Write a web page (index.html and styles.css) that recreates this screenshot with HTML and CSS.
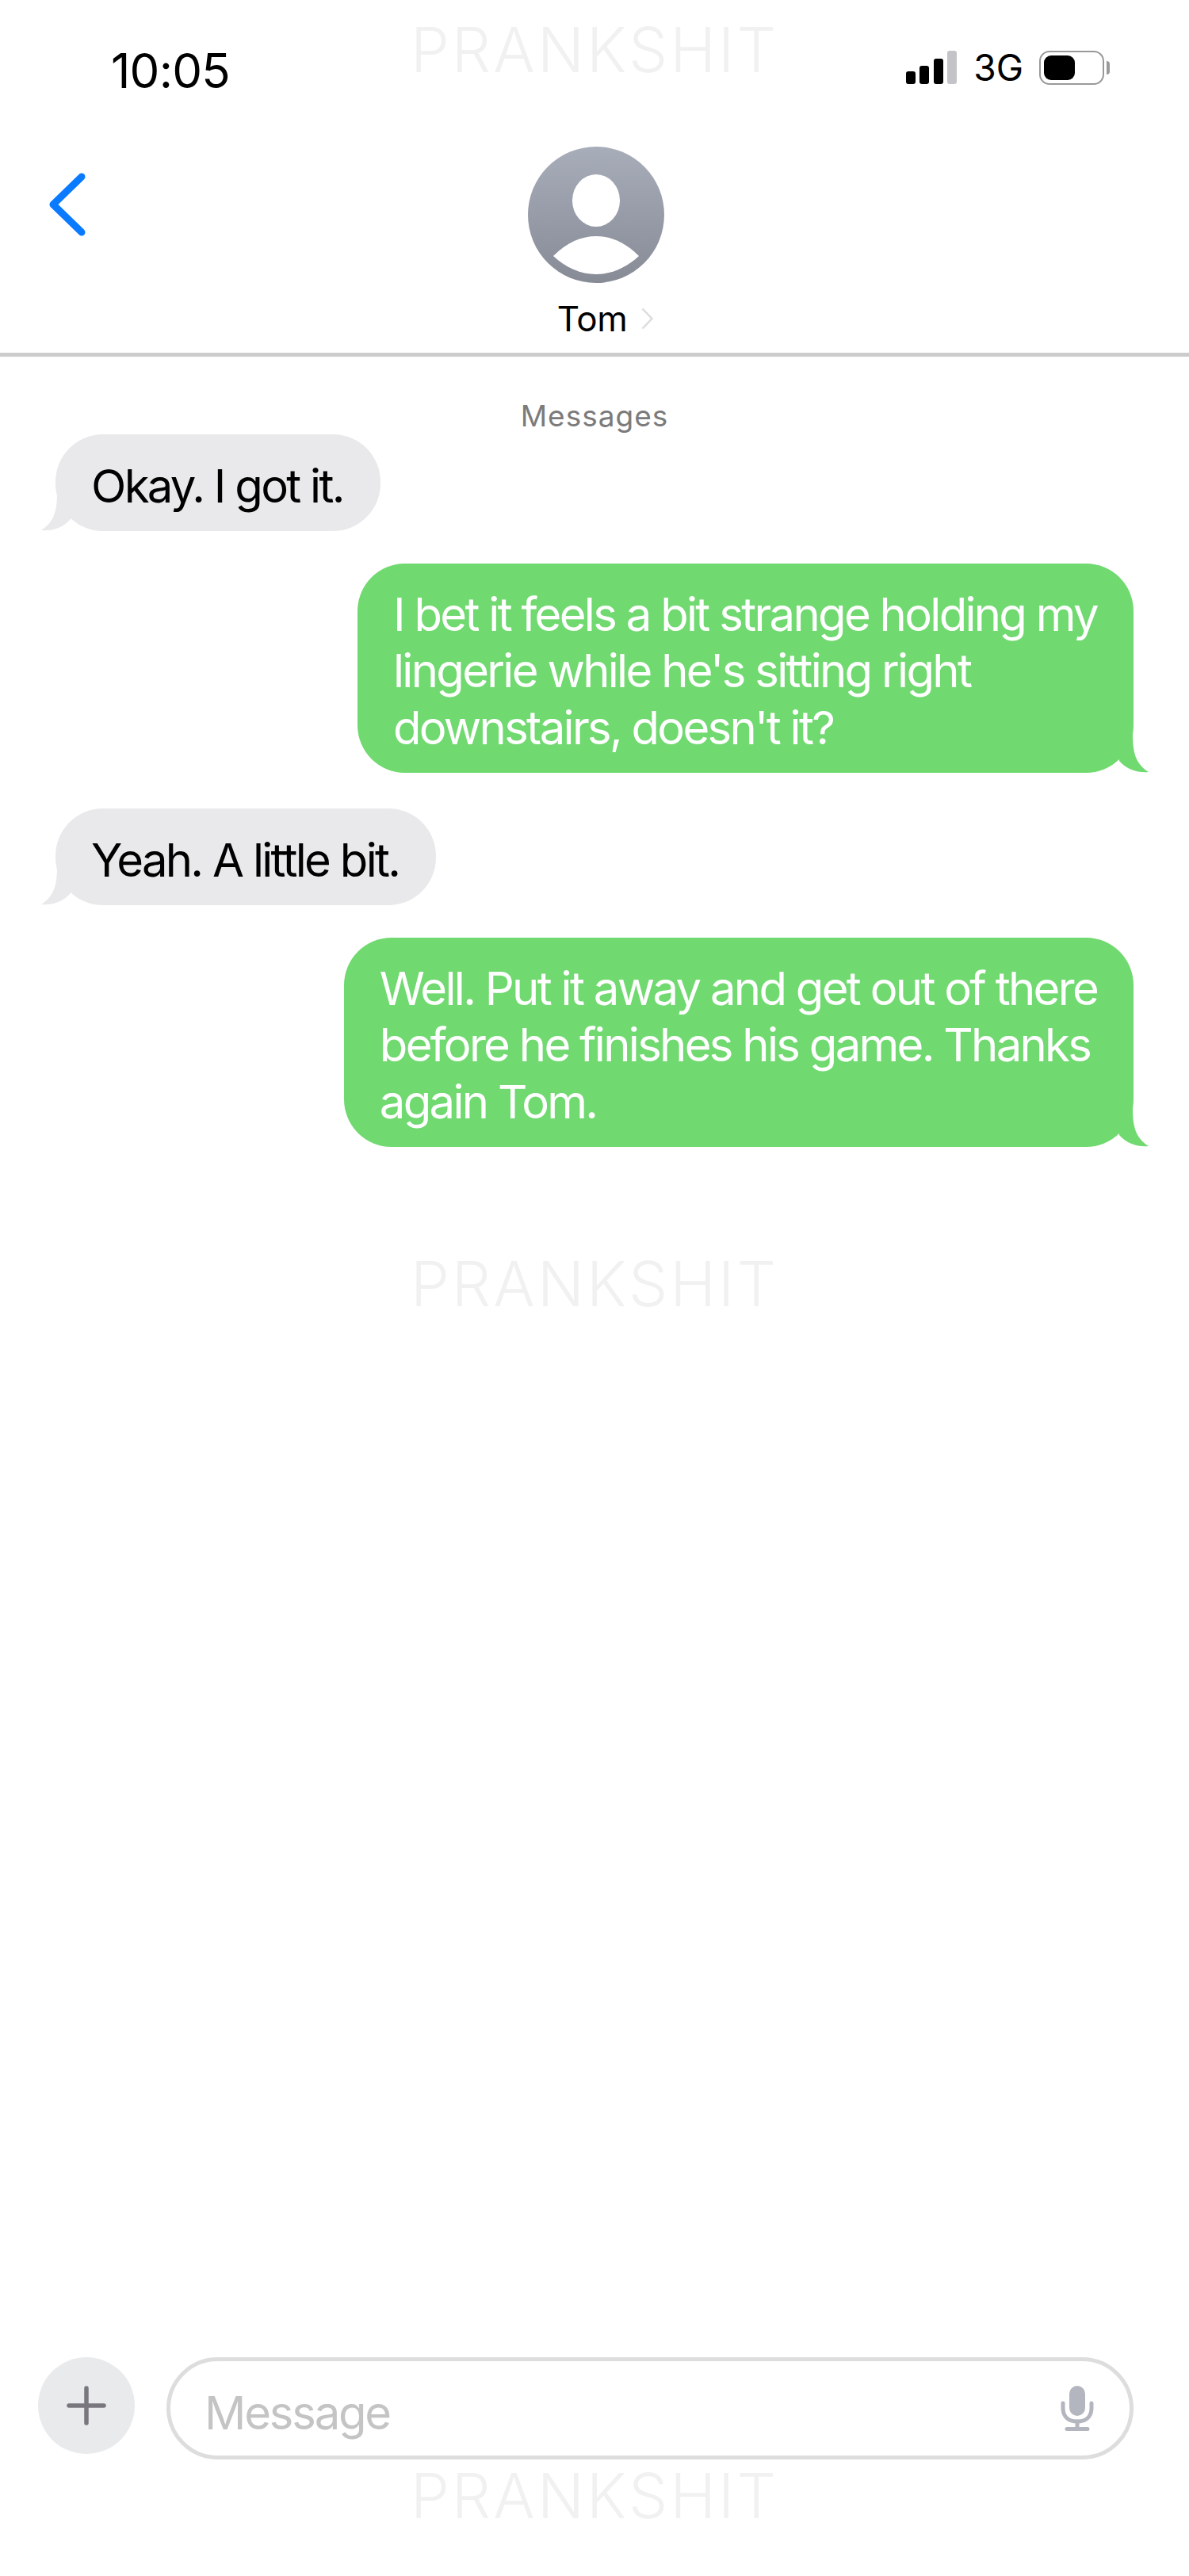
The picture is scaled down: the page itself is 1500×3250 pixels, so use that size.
FILE: index.html
```html
<!DOCTYPE html>
<html lang="en">
  <head>
    <meta charset="UTF-8" />
    <meta name="viewport" content="width=device-width, initial-scale=1.0" />
    <title>Messages</title>
    <link rel="stylesheet" href="styles.css">
  </head>
  <body>
    <div class="watermark wm-top">PRANKSHIT</div>
    <div class="watermark wm-middle">PRANKSHIT</div>
    <div class="watermark wm-bottom">PRANKSHIT</div>

    <div class="status-bar">
      <span class="time">10:05</span>
      <div class="status-icons">
        <div class="signal">
          <span class="bar bar1"></span>
          <span class="bar bar2"></span>
          <span class="bar bar3"></span>
          <span class="bar bar4"></span>
        </div>
        <span class="network">3G</span>
        <div class="battery">
          <div class="battery-level"></div>
        </div>
        <span class="battery-nub"></span>
      </div>
    </div>

    <div class="header">
      <svg class="back" viewBox="0 0 46 80" width="46" height="80">
        <path d="M41 5 L5 40 L41 75" fill="none" stroke="#0a7aff" stroke-width="9" stroke-linecap="round" stroke-linejoin="round" />
      </svg>
      <svg class="avatar" viewBox="0 0 172 172" width="172" height="172">
        <defs>
          <linearGradient id="avatarFill" x1="0" y1="0" x2="0" y2="1">
            <stop offset="0" stop-color="#a8adba" />
            <stop offset="1" stop-color="#868b96" />
          </linearGradient>
        </defs>
        <circle cx="86" cy="86" r="86" fill="url(#avatarFill)" />
        <ellipse cx="86" cy="68" rx="30" ry="33" fill="#fff" />
        <path d="M32 138 C50 120 68 113 86 113 C104 113 122 120 140 138 C125 152 106 161 86 161 C66 161 47 152 32 138 Z" fill="#fff" />
      </svg>
      <div class="contact">
        <span class="contact-name">Tom</span>
        <svg class="contact-arrow" viewBox="0 0 15 28" width="15" height="28">
          <path d="M1.5 1.5 L13.5 14 L1.5 26.5" fill="none" stroke="#dcdcdc" stroke-width="2.5" />
        </svg>
      </div>
    </div>

    <div class="thread">
      <div class="service">Messages</div>

      <div class="bubble received">
        <svg class="tail" viewBox="0 0 40 50" width="40" height="50">
          <path d="M21 0 C21 24 18 38 1 49 C14 50 27 47 38 35 L40 0 Z" fill="#e9e9eb" />
        </svg>
        Okay. I got it.
      </div>

      <div class="bubble sent">
        <svg class="tail" viewBox="0 0 40 50" width="40" height="50">
          <path d="M19 0 C19 24 22 38 39 49 C26 50 13 47 2 35 L0 0 Z" fill="#70d970" />
        </svg>
        I bet it feels a bit strange holding my<br>lingerie while he's sitting right<br>downstairs, doesn't it?
      </div>

      <div class="bubble received">
        <svg class="tail" viewBox="0 0 40 50" width="40" height="50">
          <path d="M21 0 C21 24 18 38 1 49 C14 50 27 47 38 35 L40 0 Z" fill="#e9e9eb" />
        </svg>
        Yeah. A little bit.
      </div>

      <div class="bubble sent">
        <svg class="tail" viewBox="0 0 40 50" width="40" height="50">
          <path d="M19 0 C19 24 22 38 39 49 C26 50 13 47 2 35 L0 0 Z" fill="#70d970" />
        </svg>
        Well. Put it away and get out of there<br>before he finishes his game. Thanks<br>again Tom.
      </div>
    </div>

    <div class="composer">
      <div class="plus">
        <svg viewBox="0 0 50 50" width="50" height="50">
          <path d="M25 3 V47 M3 25 H47" fill="none" stroke="#77777d" stroke-width="5.5" stroke-linecap="round" />
        </svg>
      </div>
      <div class="message-input">
        <span class="placeholder">Message</span>
        <svg class="mic" viewBox="0 0 42 58" width="42" height="58">
          <rect x="11" y="0" width="20" height="38" rx="10" fill="#b4b6bf" />
          <path d="M3 22 V28 C3 39 10 45 21 45 C32 45 39 39 39 28 V22" fill="none" stroke="#b4b6bf" stroke-width="5" stroke-linecap="round" />
          <path d="M21 45 V54 M8 54.5 H34" fill="none" stroke="#b4b6bf" stroke-width="5" stroke-linecap="round" />
        </svg>
      </div>
    </div>
  </body>
</html>
```

FILE: styles.css
```css
html,
body {
  margin: 0;
  padding: 0;
}

body {
  position: relative;
  width: 1500px;
  height: 3250px;
  overflow: hidden;
  background-color: #fff;
  font-family: Inter, "Liberation Sans", sans-serif;
  color: #000;
  display: flex;
  flex-direction: column;
}

.watermark {
  position: absolute;
  left: 0;
  width: 100%;
  text-align: center;
  font-size: 78px;
  line-height: 80px;
  font-weight: 300;
  letter-spacing: 3px;
  color: #f1f1f2;
}

.wm-top {
  top: 23px;
}

.wm-middle {
  top: 1580px;
}

.wm-bottom {
  top: 3109px;
}

.status-bar {
  position: relative;
  display: flex;
  flex: none;
  justify-content: space-between;
  align-items: center;
  height: 90px;
  padding: 40px 100px 0 140px;
}

.time {
  font-size: 60px;
  line-height: 90px;
  margin-top: 7px;
  letter-spacing: -0.8px;
}

.status-icons {
  display: flex;
  align-items: center;
}

.signal {
  display: flex;
  align-items: flex-end;
  gap: 5.5px;
  height: 42px;
  margin-right: 21px;
}

.bar {
  width: 12px;
  border-radius: 3px;
  background-color: #000;
}

.bar1 {
  height: 16px;
}

.bar2 {
  height: 23px;
}

.bar3 {
  height: 32px;
}

.bar4 {
  height: 42px;
  background-color: #c4c4c8;
}

.network {
  font-size: 46px;
  line-height: 46px;
  margin-right: 20px;
}

.battery {
  box-sizing: border-box;
  width: 82px;
  height: 43px;
  padding: 4px;
  border: 2px solid #999;
  border-radius: 13px;
}

.battery-level {
  width: 39px;
  height: 100%;
  border-radius: 9px;
  background-color: #000;
}

.battery-nub {
  width: 4px;
  height: 17px;
  margin-left: 3px;
  border-radius: 0 9px 9px 0;
  background-color: #999;
}

.header {
  position: relative;
  display: flex;
  flex: none;
  flex-direction: column;
  align-items: center;
  box-sizing: border-box;
  height: 320px;
  padding-top: 55px;
  border-bottom: 5px solid #ccc;
}

.back {
  position: absolute;
  left: 62px;
  top: 88px;
}

.avatar {
  flex: none;
  margin-left: 4px;
}

.contact {
  display: flex;
  align-items: center;
  margin-top: 20px;
  margin-left: 27px;
}

.contact-name {
  font-size: 44px;
  line-height: 50px;
  letter-spacing: -0.5px;
}

.contact-arrow {
  margin-left: 18px;
}

.thread {
  display: flex;
  flex-direction: column;
  padding: 0 70px;
}

.service {
  text-align: center;
  font-size: 37px;
  line-height: 46px;
  margin-top: 52px;
  letter-spacing: 1px;
  color: #7b7b7b;
}

.bubble {
  position: relative;
  box-sizing: border-box;
  width: fit-content;
  font-size: 58px;
  line-height: 71.5px;
  letter-spacing: -2.7px;
  border-radius: 60px;
}

.received {
  align-self: flex-start;
  padding: 30px 47px 20px 45px;
  background-color: #e9e9eb;
  margin-bottom: 41px;
}

.sent {
  align-self: flex-end;
  padding: 29px 46px 21px 45px;
  background-color: #70d970;
  color: #fff;
  margin-bottom: 45px;
}

.tail {
  position: absolute;
  bottom: 0;
}

.received .tail {
  left: -19px;
}

.sent .tail {
  right: -20px;
}

.composer {
  display: flex;
  align-items: flex-start;
  gap: 40px;
  margin-top: auto;
  padding: 0 70px 147px 48px;
}

.plus {
  display: flex;
  flex: none;
  align-items: center;
  justify-content: center;
  width: 122px;
  height: 122px;
  border-radius: 50%;
  background-color: #e9eaec;
}

.message-input {
  display: flex;
  flex: 1;
  align-items: center;
  justify-content: space-between;
  box-sizing: border-box;
  height: 129px;
  padding: 0 45px 0 43px;
  border: 5px solid #ddd;
  border-radius: 65px;
}

.placeholder {
  font-size: 58px;
  line-height: 70px;
  letter-spacing: -2.2px;
  color: #c4c4c4;
  margin-top: 11px;
}

.mic {
  flex: none;
}
```
